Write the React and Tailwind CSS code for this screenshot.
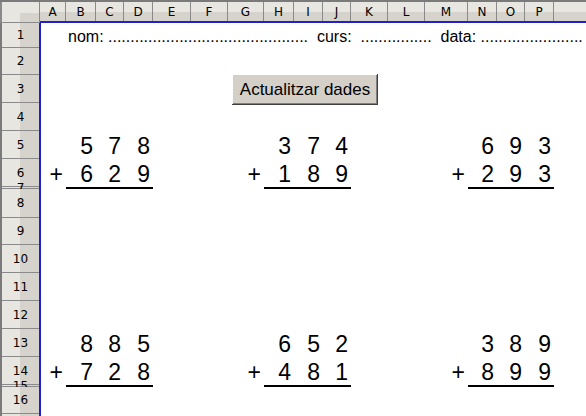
import React from "react";

const cols = [
  ["A", "w-[26px]"], ["B", "w-[30px]"], ["C", "w-[28px]"], ["D", "w-[29px]"], ["E", "w-[38px]"],
  ["F", "w-[37px]"], ["G", "w-[36px]"], ["H", "w-[30px]"], ["I", "w-[29px]"], ["J", "w-[28px]"],
  ["K", "w-[37px]"], ["L", "w-[37px]"], ["M", "w-[43px]"], ["N", "w-[29px]"], ["O", "w-[28px]"],
  ["P", "w-[29px]"],
];

const rows = [
  ["1", "h-[25px]"], ["2", "h-[27px]"], ["3", "h-[28px]"], ["4", "h-[28px]"], ["5", "h-[28px]"],
  ["6", "h-[28px]"], ["7", "h-[2px]"], ["8", "h-[29px]"], ["9", "h-[27px]"], ["10", "h-[28px]"],
  ["11", "h-[28px]"], ["12", "h-[28px]"], ["13", "h-[28px]"], ["14", "h-[28px]"], ["15", "h-[2px]"],
  ["16", "h-[27px]"], ["", "h-[28px]"],
];

const sums = [
  { cols: ["col-start-1", "col-start-2", "col-start-3", "col-start-4"], line: "col-start-2", rows: ["row-start-5", "row-start-6", "row-start-7"], a: "578", b: "629" },
  { cols: ["col-start-7", "col-start-8", "col-start-9", "col-start-10"], line: "col-start-8", rows: ["row-start-5", "row-start-6", "row-start-7"], a: "374", b: "189" },
  { cols: ["col-start-13", "col-start-14", "col-start-15", "col-start-16"], line: "col-start-14", rows: ["row-start-5", "row-start-6", "row-start-7"], a: "693", b: "293" },
  { cols: ["col-start-1", "col-start-2", "col-start-3", "col-start-4"], line: "col-start-2", rows: ["row-start-13", "row-start-14", "row-start-15"], a: "885", b: "728" },
  { cols: ["col-start-7", "col-start-8", "col-start-9", "col-start-10"], line: "col-start-8", rows: ["row-start-13", "row-start-14", "row-start-15"], a: "652", b: "481" },
  { cols: ["col-start-13", "col-start-14", "col-start-15", "col-start-16"], line: "col-start-14", rows: ["row-start-13", "row-start-14", "row-start-15"], a: "389", b: "899" },
];

const cell = "flex items-end justify-end pr-[3px] pb-[1px] text-[23px] leading-[24px]";

function Sum({ s }) {
  return (
    <>
      {s.a.split("").map((d, i) => (
        <div key={"a" + i} className={`${s.cols[i + 1]} ${s.rows[0]} ${cell}`}>{d}</div>
      ))}
      <div className={`${s.cols[0]} ${s.rows[1]} ${cell} pr-[1px]`}>+</div>
      {s.b.split("").map((d, i) => (
        <div key={"b" + i} className={`${s.cols[i + 1]} ${s.rows[1]} ${cell}`}>{d}</div>
      ))}
      <div className={`${s.line} col-span-3 ${s.rows[2]} bg-black`} />
    </>
  );
}

export default function App() {
  const dots = (n) => ".".repeat(n);
  return (
    <div className="w-[586px] h-[416px] overflow-hidden bg-white text-black font-['Liberation_Sans',Arial,sans-serif]">
      {/* column headers */}
      <div className="flex h-[23px] border-t-2 border-[#7a7a7a]">
        <div className="w-[40px] shrink-0 flex flex-col border-l-2 border-b border-r border-[#8a8a8a] bg-[#e8e6e1]">
          <div className="h-[11px]" />
          <div className="flex flex-1">
            <div className="w-[18px]" />
            <div className="flex-1 bg-[#d6d3cc]" />
          </div>
        </div>
        <div className="flex flex-1 border-b-2 border-[#2020d0]">
          {cols.map(([l, w]) => (
            <div
              key={l}
              className={`${w} shrink-0 border-r border-[#8a8a8a] flex items-center justify-center text-[12px] font-['DejaVu_Sans',sans-serif] bg-[linear-gradient(to_bottom,#e8e6e1_10px,#d6d3cc_10px)]`}
            >
              {l}
            </div>
          ))}
          <div className="flex-1 bg-[linear-gradient(to_bottom,#e8e6e1_10px,#d6d3cc_10px)]" />
        </div>
      </div>

      <div className="flex">
        {/* row headers */}
        <div className="w-[39px] shrink-0 flex flex-col border-l-2 border-[#7a7a7a]">
          {rows.map(([l, h], i) => (
            <div
              key={i}
              className={`${h} shrink-0 border-b border-[#8a8a8a] flex items-center justify-center overflow-visible text-[12px] leading-none font-['DejaVu_Sans',sans-serif] bg-[linear-gradient(to_right,#e8e6e1_18px,#d6d3cc_18px)]`}
            >
              {l}
            </div>
          ))}
        </div>

        {/* sheet */}
        <div className="flex-1 border-l-2 border-[#2020d0] grid grid-cols-[25px_30px_28px_29px_38px_37px_36px_30px_29px_28px_37px_37px_43px_29px_28px_29px_1fr] grid-rows-[25px_27px_28px_28px_28px_28px_2px_29px_27px_28px_28px_28px_28px_28px_2px_27px_28px]">
          <div className="col-start-1 col-span-17 row-start-1 flex items-end pl-[27px] pb-[2px] text-[16px] leading-[18px] whitespace-nowrap">
            {"nom: " + dots(45) + " \u00a0curs: \u00a0" + dots(16) + " \u00a0data: " + dots(23)}
          </div>

          <div className="col-start-7 col-span-5 row-start-3 self-start -mt-px">
            <button className="ml-[4px] w-[146px] h-[31px] bg-[#d4d0c8] text-[17px] leading-none text-black shadow-[inset_-1px_-1px_#404040,inset_1px_1px_#ffffff,inset_-2px_-2px_#808080]">
              Actualitzar dades
            </button>
          </div>

          {sums.map((s, i) => (
            <Sum key={i} s={s} />
          ))}
        </div>
      </div>
    </div>
  );
}
